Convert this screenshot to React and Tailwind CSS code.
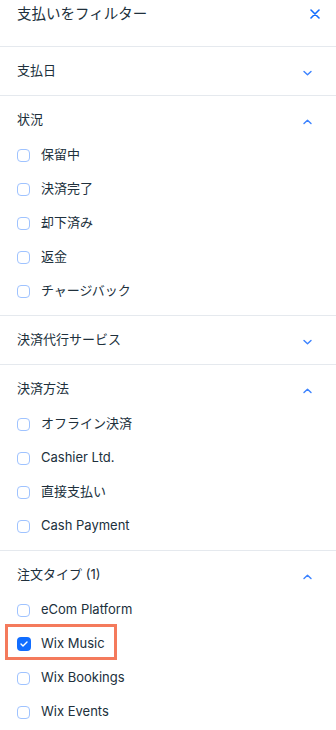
import React from 'react';

const font = { fontFamily: 'Inter, "Noto Sans CJK JP", sans-serif' };

const Chevron = ({ up }) => (
  <svg width="9" height="6" viewBox="0 0 9 6" className="mt-[3px]">
    <path
      d={up ? 'M1 4.5 L4.5 1.2 L8 4.5' : 'M1 1.5 L4.5 4.8 L8 1.5'}
      fill="none"
      stroke="#3b82ff"
      strokeWidth="1.4"
      strokeLinecap="round"
      strokeLinejoin="round"
    />
  </svg>
);

const Checkbox = ({ checked }) =>
  checked ? (
    <span className="w-[14px] h-[14px] rounded-[4px] bg-[#116dff] flex items-center justify-center">
      <svg width="8" height="6" viewBox="0 0 8 6">
        <path d="M1 3 L3 5 L7 1" fill="none" stroke="#fff" strokeWidth="1.4" strokeLinecap="round" strokeLinejoin="round" />
      </svg>
    </span>
  ) : (
    <span className="w-[13px] h-[13px] rounded-[4px] border-[1.5px] border-[#9fc3ff] bg-white" />
  );

const Item = ({ label, checked, highlight }) => (
  <div className="relative h-[34px] flex items-center pl-[17px]">
    {highlight && (
      <span className="absolute left-[5px] top-[-3px] w-[112px] h-[36px] border-[3px] border-[#f47a5c]" />
    )}
    <Checkbox checked={checked} />
    <span className={`${checked ? 'ml-[10px]' : 'ml-[11px]'} text-[13px] text-[#20303c]`}>{label}</span>
  </div>
);

const Section = ({ title, items }) => (
  <div className={`border-t border-[#e5e9ee] ${items ? 'pb-[7px]' : 'pb-[14px]'}`}>
    <div className="pt-[14px] h-[34px] flex items-center justify-between pl-[17px] pr-[24px]">
      <span className="text-[13px] text-[#20303c]">{title}</span>
      <Chevron up={!!items} />
    </div>
    {items && (
      <div className="mt-2">
        {items.map((it) => (
          <Item key={it.label} {...it} />
        ))}
      </div>
    )}
  </div>
);

export default function App() {
  return (
    <div className="w-[336px] h-[730px] bg-white overflow-hidden" style={font}>
      <div className="h-[46px] pt-[4px]">
        <div className="h-[20px] flex items-center justify-between pl-[17px] pr-[16px]">
          <span className="text-[14.5px] text-[#20303c]">支払いをフィルター</span>
          <svg width="10" height="10" viewBox="0 0 10 10">
            <path d="M1 1 L9 9 M9 1 L1 9" stroke="#116dff" strokeWidth="1.6" strokeLinecap="round" />
          </svg>
        </div>
      </div>
      <Section title="支払日" />
      <Section
        title="状況"
        items={[
          { label: '保留中' },
          { label: '決済完了' },
          { label: '却下済み' },
          { label: '返金' },
          { label: 'チャージバック' },
        ]}
      />
      <Section title="決済代行サービス" />
      <Section
        title="決済方法"
        items={[
          { label: 'オフライン決済' },
          { label: 'Cashier Ltd.' },
          { label: '直接支払い' },
          { label: 'Cash Payment' },
        ]}
      />
      <Section
        title="注文タイプ (1)"
        items={[
          { label: 'eCom Platform' },
          { label: 'Wix Music', checked: true, highlight: true },
          { label: 'Wix Bookings' },
          { label: 'Wix Events' },
        ]}
      />
    </div>
  );
}
